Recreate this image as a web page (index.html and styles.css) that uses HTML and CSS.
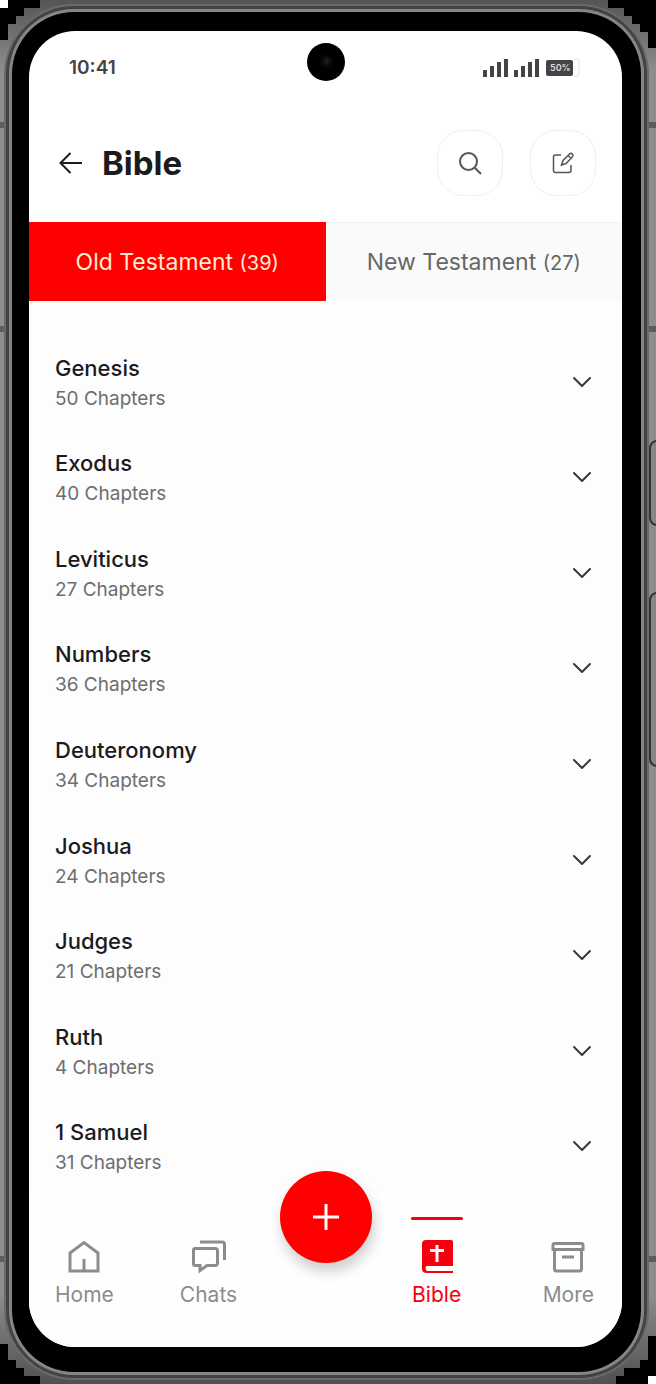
FILE: index.html
```
<!DOCTYPE html>
<html lang="en">
<head>
<meta charset="utf-8">
<meta name="viewport" content="width=device-width, initial-scale=1">
<title>Bible</title>
<link rel="stylesheet" href="styles.css">
</head>
<body>
<div class="phone">
  <svg class="corner top-left" viewBox="0 0 40 40" aria-hidden="true"><path d="M0 0H40V8H24V16H16V24H8V40H0Z"/><path class="chip" d="M0 0H8V8H0Z"/></svg>
  <svg class="corner top-right" viewBox="0 0 48 48" aria-hidden="true"><path d="M0 0H48V48H40V32H32V24H24V16H16V8H0Z"/></svg>
  <svg class="corner bottom-left" viewBox="0 0 40 40" aria-hidden="true"><path d="M0 0H8V16H16V24H24V32H40V40H0Z"/></svg>
  <svg class="corner bottom-right" viewBox="0 0 48 48" aria-hidden="true"><path d="M48 0V48H8V40H16V32H32V24H40V0Z"/><path class="chip" d="M40 40H48V48H40Z"/></svg>
  <span class="side-key volume"></span>
  <span class="side-key power"></span>
  <div class="bezel">
    <div class="screen">
      <span class="camera"></span>
      <div class="status">
        <time>10:41</time>
        <svg class="status-icons" viewBox="0 0 98 20" role="img" aria-label="Signal and battery 50%">
          <path class="bars" d="M2 19V12M9 19V8M16 19V4M23 19V1M33 19V12M40 19V8M47 19V4M54 19V1"/>
          <rect class="cell" x="63" y="2" width="27" height="16" rx="2"/>
          <path class="cap" d="M91 1H95Q96 1 96 3V16Q96 18 94 18H91"/>
          <text x="67" y="13">50%</text>
        </svg>
      </div>
      <header class="header">
        <button class="back" aria-label="Back"><svg viewBox="0 0 24 24"><path d="M23 12H2M11.500 2L1.500 12L11.500 22"/></svg></button>
        <h1>Bible</h1>
        <button class="tool" aria-label="Search"><svg viewBox="0 0 24 24"><circle cx="10.500" cy="10.500" r="8.500"/><path d="M17 17L23 23"/></svg></button>
        <button class="tool edit" aria-label="Edit"><svg viewBox="0 0 24 24"><path d="M10 4H4.500Q2.500 4 2.500 6V19.500Q2.500 21.500 4.500 21.500H18Q20 21.500 20 19.500V14M10.500 14L12 9.500L18.500 3Q20 1.700 21.500 3Q22.700 4.500 21.300 6L15 12.500ZM17 4.500L20 7.500"/></svg></button>
      </header>
      <div class="tabs" role="tablist">
        <button class="tab active" role="tab" aria-selected="true">Old Testament <small>(39)</small></button>
        <button class="tab" role="tab" aria-selected="false">New Testament <small>(27)</small></button>
      </div>
      <main class="books">
        <button class="book"><span class="text"><span class="name">Genesis</span><span class="count">50 Chapters</span></span><svg viewBox="0 0 20 12"><path d="M2 2L10 10L18 2"/></svg></button>
        <button class="book"><span class="text"><span class="name">Exodus</span><span class="count">40 Chapters</span></span><svg viewBox="0 0 20 12"><path d="M2 2L10 10L18 2"/></svg></button>
        <button class="book"><span class="text"><span class="name">Leviticus</span><span class="count">27 Chapters</span></span><svg viewBox="0 0 20 12"><path d="M2 2L10 10L18 2"/></svg></button>
        <button class="book"><span class="text"><span class="name">Numbers</span><span class="count">36 Chapters</span></span><svg viewBox="0 0 20 12"><path d="M2 2L10 10L18 2"/></svg></button>
        <button class="book"><span class="text"><span class="name">Deuteronomy</span><span class="count">34 Chapters</span></span><svg viewBox="0 0 20 12"><path d="M2 2L10 10L18 2"/></svg></button>
        <button class="book"><span class="text"><span class="name">Joshua</span><span class="count">24 Chapters</span></span><svg viewBox="0 0 20 12"><path d="M2 2L10 10L18 2"/></svg></button>
        <button class="book"><span class="text"><span class="name">Judges</span><span class="count">21 Chapters</span></span><svg viewBox="0 0 20 12"><path d="M2 2L10 10L18 2"/></svg></button>
        <button class="book"><span class="text"><span class="name">Ruth</span><span class="count">4 Chapters</span></span><svg viewBox="0 0 20 12"><path d="M2 2L10 10L18 2"/></svg></button>
        <button class="book"><span class="text"><span class="name">1 Samuel</span><span class="count">31 Chapters</span></span><svg viewBox="0 0 20 12"><path d="M2 2L10 10L18 2"/></svg></button>
      </main>
      <nav class="nav">
        <div class="group left">
          <a href="#home"><svg viewBox="0 0 34 34"><path d="M3 13L17 2.500L31 13V31H3ZM17 19V31"/></svg>Home</a>
          <a href="#chats"><svg viewBox="0 0 34 34"><path d="M3 8.500H23Q25.500 8.500 25.500 11V23Q25.500 25.500 23 25.500H15L8 30.500V25.500H3Q1.500 25.500 1.500 24V10Q1.500 8.500 3 8.500ZM8 2H30Q32.500 2 32.500 4.500V20"/></svg>Chats</a>
        </div>
        <button class="add" aria-label="Add"><svg viewBox="0 0 28 28"><path d="M14 1V27M1 14H27"/></svg></button>
        <div class="group right">
          <a href="#bible" class="current" aria-current="page"><svg viewBox="0 0 34 34"><path class="solid" d="M6 0H31Q33 0 33 2V26H7Q5.500 26 5.500 28T7 31H33V33H7Q2 33 2 29V4Q2 0 6 0Z"/><path class="cross" d="M17 5V22M10 10.500H24"/></svg>Bible</a>
          <a href="#more"><svg viewBox="0 0 34 34"><path d="M3.500 3.500H30.500Q32 3.500 32 5V9.500H2V5Q2 3.500 3.500 3.500ZM3.500 10V29Q3.500 31 5.500 31H28.500Q30.500 31 30.500 29V10M11 17H23"/></svg>More</a>
        </div>
      </nav>
    </div>
  </div>
</div>
</body>
</html>
```
FILE: styles.css
```
* { box-sizing: border-box; }
body {
  margin: 0;
  background: #000;
  font-family: Inter, "Liberation Sans", sans-serif;
  color: #1b1b1e;
}
button { border: 0; padding: 0; background: none; font: inherit; color: inherit; cursor: pointer; }
a { color: inherit; text-decoration: none; }
svg { display: block; fill: none; stroke: currentColor; }

.phone {
  position: relative;
  display: flex;
  min-height: 100vh;
  padding: 12px 15px 12px 12px;
  overflow: hidden;
  background: linear-gradient(#555, #8d8d8d 70px, #8d8d8d calc(100% - 90px), #505050);
}
.phone::before,
.phone::after {
  content: "";
  position: absolute;
  left: 0;
  right: 0;
  border: solid #5c5c5c;
  border-width: 6px 0;
}
.phone::before { top: 122px; bottom: 122px; }
.phone::after { top: 326px; height: 6px; border-bottom: 0; }
.corner { position: absolute; width: 40px; height: 40px; fill: #000; stroke: none; }
.corner .chip { fill: #fff; }
.top-left { top: 0; left: 0; }
.top-right { top: 0; right: 0; width: 48px; height: 48px; }
.bottom-left { bottom: 0; left: 0; }
.bottom-right { bottom: 0; right: 0; width: 48px; height: 48px; }
.side-key {
  position: absolute;
  right: -10px;
  width: 17px;
  border: 2px solid #333;
  border-radius: 8px;
  background: #858585;
}
.volume { top: 440px; height: 86px; }
.power { top: 592px; height: 175px; }

.bezel {
  position: relative;
  z-index: 1;
  display: flex;
  flex: 1;
  min-width: 0;
  padding: 19px 19px 25px 17px;
  border-radius: 62px;
  background: #000;
  box-shadow: 0 0 0 3px #858585, 0 0 0 6px #434343, 0 0 0 8px #6a6a6a;
}
.screen {
  position: relative;
  display: flex;
  flex: 1;
  flex-direction: column;
  min-width: 0;
  border-radius: 46px;
  background: #fff;
}
.camera {
  position: absolute;
  top: 12px;
  left: 50%;
  width: 38px;
  height: 38px;
  margin-left: -19px;
  border-radius: 50%;
  background: radial-gradient(circle at 52% 48%, #222 0, #0b0b0b 4px, #000 8px);
}
.status {
  display: flex;
  align-items: center;
  justify-content: space-between;
  height: 73px;
  padding: 0 41px 0 40px;
  color: #444;
}
.status time { font-size: 19px; font-weight: 600; }
.status-icons { width: 98px; height: 20px; }
.bars { stroke-width: 4; }
.cell { fill: #444; stroke: none; }
.cap { stroke: #e4e4e4; }
.status-icons text { fill: #ddd; stroke: none; font-size: 9px; font-weight: 600; }

.header {
  display: flex;
  align-items: center;
  gap: 27px;
  height: 118px;
  padding: 0 26px 0 30px;
}
.back svg { width: 24px; height: 24px; stroke-width: 2; }
.header h1 { flex: 1; margin: 0 0 0 -8px; font-size: 33px; font-weight: 700; }
.tool {
  display: grid;
  place-items: center;
  width: 66px;
  height: 66px;
  border: 1px solid #efefef;
  border-radius: 26px;
  color: #555;
}
.tool svg { width: 24px; height: 24px; stroke-width: 2; }
.edit svg { stroke-width: 1.500; }

.tabs { display: grid; grid-template-columns: 1fr 1fr; height: 79px; }
.tab {
  border-top: 1px solid #f3f3f3;
  background: #fafafa;
  color: #666;
  font-size: 23px;
}
.tab small { font-size: 20px; }
.tab.active { border-color: #f00; background: #f00; color: #ffe9d6; }

.books { display: flex; flex: 1; flex-direction: column; padding: 33px 30px 0 26px; background: #fdfdfd; }
.book { display: flex; flex: 1; align-items: center; justify-content: space-between; text-align: left; }
.text { display: flex; flex-direction: column; gap: 2px; padding-top: 2px; }
.name { font-size: 22px; font-weight: 500; line-height: 30px; }
.count { font-size: 19px; line-height: 28px; color: #6d6d70; }
.book svg { width: 20px; height: 12px; stroke: #38383b; stroke-width: 2; stroke-linecap: round; stroke-linejoin: round; }

.nav {
  position: relative;
  display: flex;
  justify-content: space-between;
  height: 153px;
  padding: 46px 28px 0 26px;
  border-radius: 0 0 46px 46px;
  background: #fefefe;
  color: #8c8c8f;
  font-size: 21px;
  line-height: 28px;
}
.group { display: flex; }
.left { gap: 66px; }
.right { gap: 80px; }
.nav a { position: relative; display: flex; flex-direction: column; align-items: center; gap: 7px; }
.nav a svg { width: 34px; height: 34px; stroke-width: 3; }
.nav .current { min-width: 52px; color: #f4000f; }
.current::before {
  content: "";
  position: absolute;
  top: -23px;
  left: 0;
  right: 0;
  height: 3px;
  border-radius: 2px;
  background: #f4000f;
}
.nav .solid { fill: currentColor; stroke: none; }
.nav .cross { stroke: #fff; }
.add {
  position: absolute;
  top: -23px;
  left: 50%;
  display: grid;
  place-items: center;
  width: 92px;
  height: 92px;
  margin-left: -46px;
  border-radius: 50%;
  background: #f00;
  color: #fff;
  box-shadow: 2px 8px 14px #0003;
}
.add svg { width: 28px; height: 28px; stroke-width: 3; }
```
